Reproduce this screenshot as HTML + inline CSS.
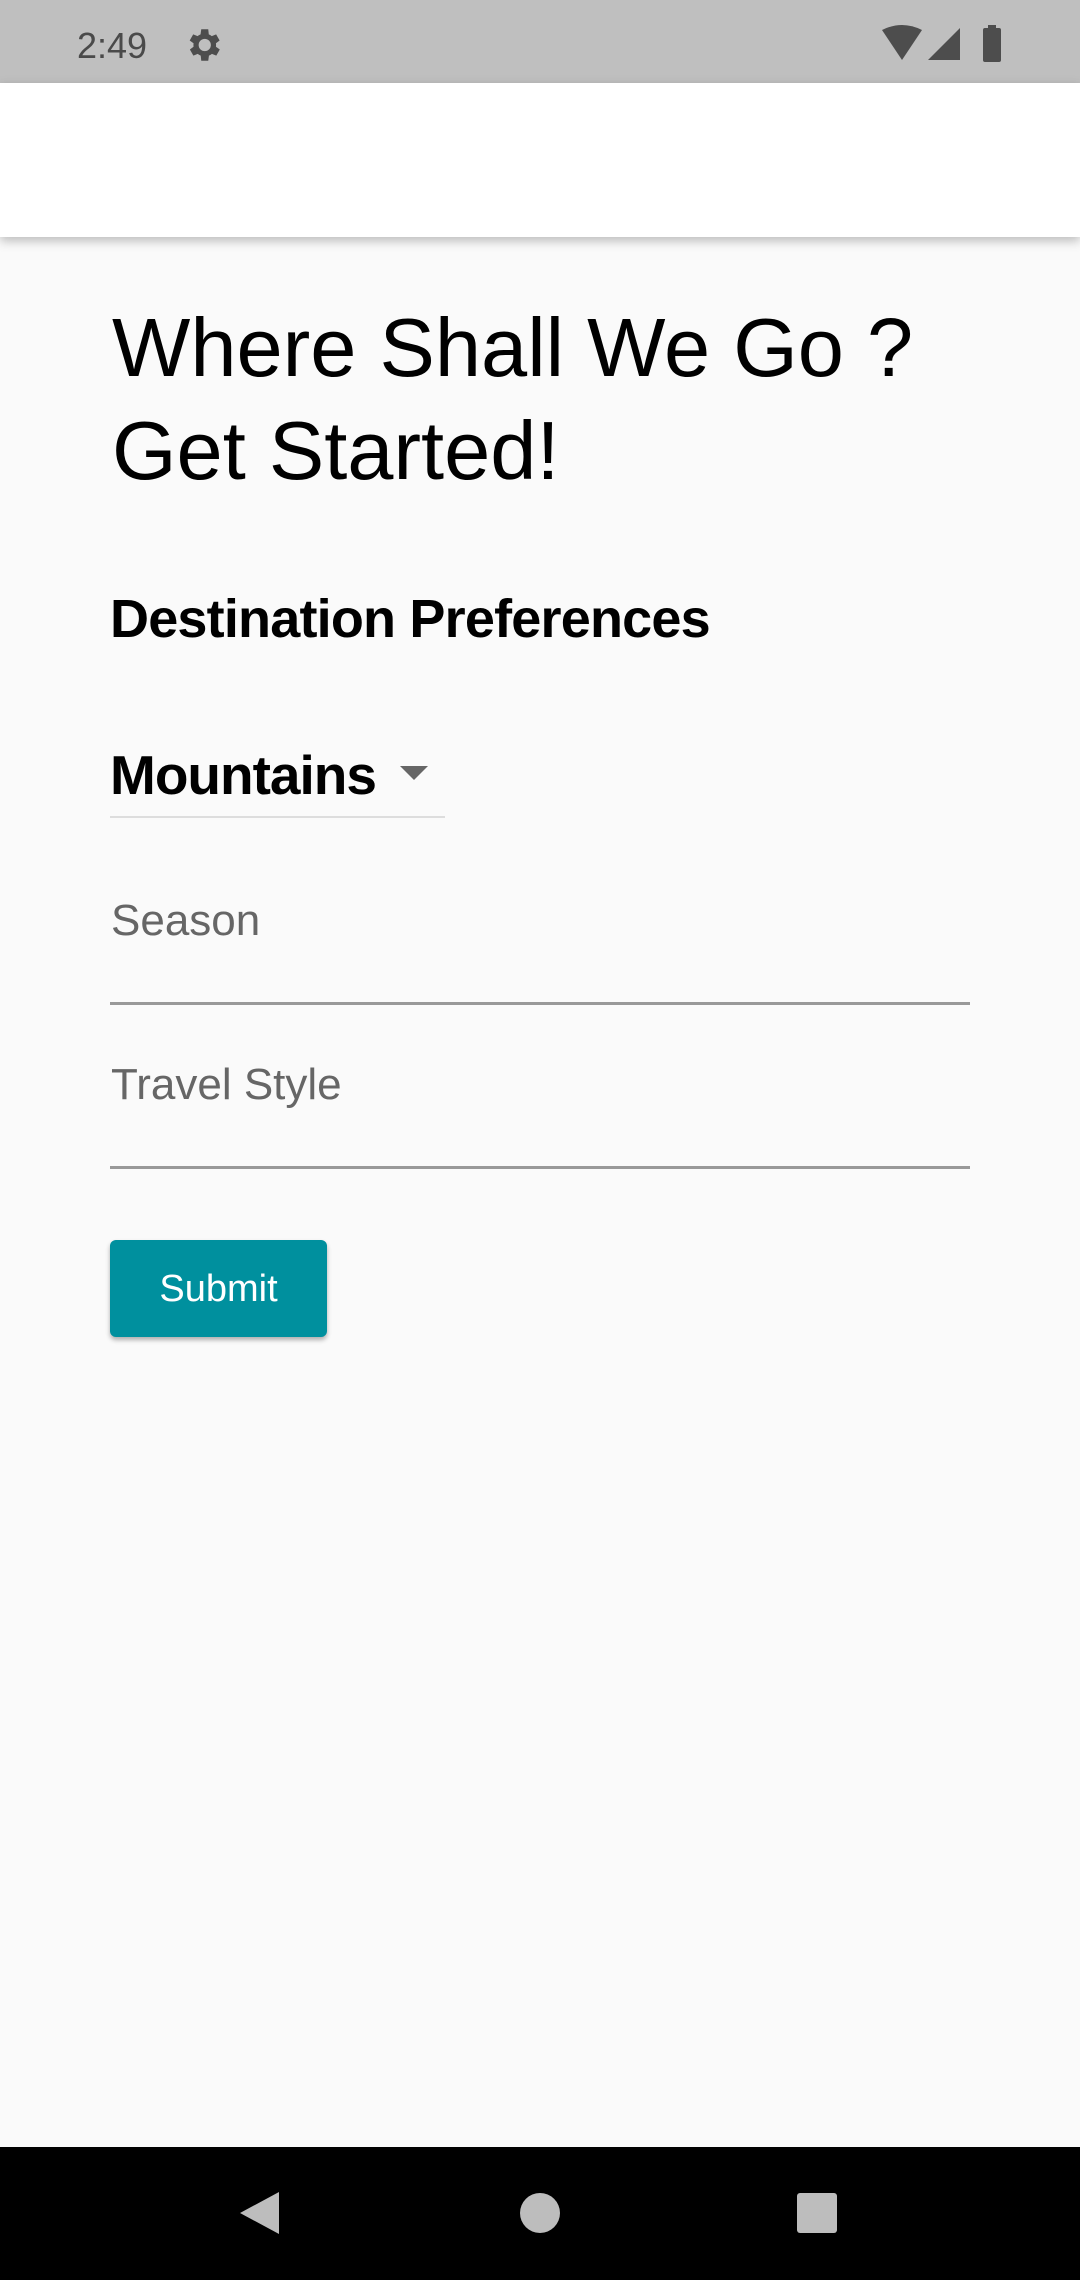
<!DOCTYPE html>
<html><head><meta charset="utf-8"><style>
body{margin:0;width:1080px;height:2280px;background:#fafafa;font-family:"Liberation Sans",sans-serif;position:relative;overflow:hidden}
.abs{position:absolute}
</style></head><body>
<div class="abs" style="left:0;top:0;width:1080px;height:83px;background:#bfbfbf"></div>
<div class="abs" style="left:77px;top:25px;font-size:36px;color:#4a4a4a">2:49</div>
<svg class="abs" style="left:182px;top:24px" width="42" height="42" viewBox="0 0 24 24"><path fill="#4d4d4d" d="M19.4 13a7.5 7.5 0 000-2l2.1-1.6-2-3.5-2.5 1a7 7 0 00-1.7-1L15 3h-4l-.4 2.9a7 7 0 00-1.7 1l-2.5-1-2 3.5L6.6 11a7.5 7.5 0 000 2l-2.1 1.6 2 3.5 2.5-1a7 7 0 001.7 1L11 21h4l.4-2.9a7 7 0 001.7-1l2.5 1 2-3.5zM13 15.5a3.5 3.5 0 110-7 3.5 3.5 0 010 7z"/></svg>
<svg class="abs" style="left:880px;top:24px" width="130" height="40" viewBox="0 0 130 40"><path fill="#4d4d4d" d="M2 6 Q22 -4 42 6 L22 36Z"/><path fill="#4d4d4d" d="M48 36 L80 4 V36Z"/><rect x="103" y="4" width="18" height="34" rx="2" fill="#4d4d4d"/><rect x="108" y="1" width="8" height="4" fill="#4d4d4d"/></svg>
<div class="abs" style="left:0;top:83px;width:1080px;height:154px;background:#fff;box-shadow:0 4px 10px rgba(0,0,0,0.25)"></div>
<div class="abs" style="left:112px;top:296px;font-size:83px;line-height:103px;color:#000">Where Shall We Go ?<br>Get Started!</div>
<div class="abs" style="left:110px;top:588px;font-size:54px;font-weight:bold;color:#000;letter-spacing:-0.8px">Destination Preferences</div>
<div class="abs" style="left:110px;top:743px;font-size:55px;font-weight:bold;color:#000;letter-spacing:-1px">Mountains</div>
<svg class="abs" style="left:400px;top:766px" width="28" height="16"><path d="M0 0H28L14 14Z" fill="#666"/></svg>
<div class="abs" style="left:110px;top:816px;width:335px;height:2px;background:#ddd"></div>
<div class="abs" style="left:111px;top:896px;font-size:44px;color:#666">Season</div>
<div class="abs" style="left:110px;top:1002px;width:860px;height:3px;background:#999"></div>
<div class="abs" style="left:111px;top:1060px;font-size:44px;color:#666">Travel Style</div>
<div class="abs" style="left:110px;top:1166px;width:860px;height:3px;background:#999"></div>
<div class="abs" style="left:110px;top:1240px;width:217px;height:97px;background:#00909e;border-radius:6px;box-shadow:0 3px 5px rgba(0,0,0,0.3);color:#fff;font-size:38px;line-height:99px;text-align:center">Submit</div>
<div class="abs" style="left:0;top:2147px;width:1080px;height:133px;background:#000"></div>
<svg class="abs" style="left:0;top:2147px" width="1080" height="133"><path fill="#bdbdbd" d="M240 66 L279 45 V87Z"/><circle cx="540" cy="66" r="20" fill="#bdbdbd"/><rect x="797" y="46" width="40" height="40" rx="3" fill="#bdbdbd"/></svg>
</body></html>
